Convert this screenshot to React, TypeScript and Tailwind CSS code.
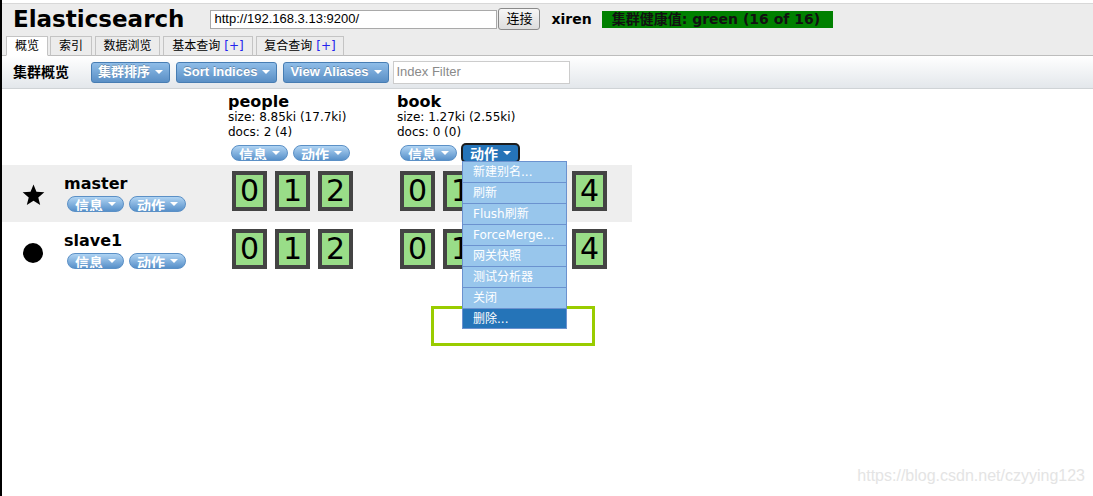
import React from "react";

const VERDANA = "font-['DejaVu_Sans','Noto_Sans_CJK_SC',sans-serif]";

function Caret() {
  return <span className="ml-[5px] inline-block h-0 w-0 self-center border-x-[4px] border-t-[4px] border-x-transparent border-t-white" />;
}

function Pill({ label }: { label: string }) {
  return (
    <div className="flex h-[16px] items-start overflow-hidden rounded-full border border-[#5b90c6] bg-gradient-to-b from-[#b0d4f3] to-[#5790c9] px-[7px] text-white">
      <span className="pt-[1px] text-[14px] font-bold leading-[17px]">{label}</span>
      <Caret />
    </div>
  );
}

function ToolButton({ label, size }: { label: string; size: string }) {
  return (
    <div className={`flex h-[21px] items-center rounded-[3px] border border-[#477db3] bg-gradient-to-b from-[#8fbde8] to-[#5a8fc5] px-[6px] font-bold text-white [text-shadow:0_-1px_0_rgba(0,0,0,0.25)] ${size}`}>
      {label}
      <Caret />
    </div>
  );
}

function Shard({ n }: { n: number }) {
  return (
    <div className="flex h-[40px] w-[35px] items-center justify-center border-[4px] border-[#444444] bg-[#99dd88] text-[30px] leading-none text-black">
      {n}
    </div>
  );
}

const menuItems = ["新建别名...", "刷新", "Flush刷新", "ForceMerge...", "网关快照", "测试分析器", "关闭", "删除..."];

function NodeCell({ name, icon }: { name: string; icon: React.ReactNode }) {
  return (
    <div className="flex w-[226px]">
      <div className="flex w-[62px] justify-center pt-[19px]">{icon}</div>
      <div className="pt-[9px]">
        <div className="text-[16px] font-bold leading-[19px]">{name}</div>
        <div className="ml-[3px] mt-[3px] flex gap-[5px]">
          <Pill label="信息" />
          <Pill label="动作" />
        </div>
      </div>
    </div>
  );
}

function ShardRow({ count, top }: { count: number; top: string }) {
  return (
    <div className={`flex gap-[8px] ${top}`}>
      {Array.from({ length: count }, (_, i) => (
        <Shard key={i} n={i} />
      ))}
    </div>
  );
}

export default function App() {
  return (
    <div className={`relative h-[496px] w-[1093px] overflow-hidden border-l-2 border-black bg-white pt-[3px] text-black ${VERDANA}`}>
      {/* header */}
      <div className="flex h-[53px] flex-col border-y border-t-[#d8d8d8] border-b-[#bdbdbd] bg-[#ececec]">
        <div className="flex h-[30px] items-center">
          <div className="ml-[11px] text-[23px] font-bold leading-none">Elasticsearch</div>
          <div className="ml-[26px] flex h-[19px] w-[287px] items-center border border-[#a9a9a9] bg-white px-[3px] font-['Liberation_Sans',sans-serif] text-[13px]">
            http://192.168.3.13:9200/
          </div>
          <div className="ml-[1px] flex h-[22px] w-[42px] items-center justify-center rounded-[3px] border border-[#8a8a8a] bg-gradient-to-b from-[#f6f6f6] to-[#dddddd] text-[13px]">
            连接
          </div>
          <div className="ml-[11px] text-[14px] font-bold">xiren</div>
          <div className="ml-[10px] flex h-[17px] w-[231px] items-center bg-[#008000] pl-[10px] text-[14px] font-bold text-[#111]">
            集群健康值: green (16 of 16)
          </div>
        </div>
        <div className="relative z-10 -mb-px mt-auto ml-[4px] flex items-end text-[12px]">
          <div className="flex h-[20px] w-[42px] items-center justify-center border border-[#c4c4c4] border-b-white bg-white">概览</div>
          <div className="ml-[2px] flex h-[20px] w-[42px] items-center justify-center border border-[#c4c4c4] border-b-[#bdbdbd] bg-[#ececec]">索引</div>
          <div className="ml-[3px] flex h-[20px] w-[65px] items-center justify-center border border-[#c4c4c4] border-b-[#bdbdbd] bg-[#ececec]">数据浏览</div>
          <div className="ml-[3px] flex h-[20px] w-[90px] items-center justify-center border border-[#c4c4c4] border-b-[#bdbdbd] bg-[#ececec]">
            基本查询 <span className="ml-[4px] text-[#2222ee]">[+]</span>
          </div>
          <div className="ml-[3px] flex h-[20px] w-[88px] items-center justify-center border border-[#c4c4c4] border-b-[#bdbdbd] bg-[#ececec]">
            复合查询 <span className="ml-[4px] text-[#2222ee]">[+]</span>
          </div>
        </div>
      </div>

      {/* toolbar */}
      <div className="flex h-[33px] items-center border-b border-[#cfd3d6] bg-gradient-to-b from-white to-[#e3e7eb] pl-[11px]">
        <div className="text-[14px] font-bold">集群概览</div>
        <div className="ml-[22px] flex items-center gap-[6px]">
          <ToolButton label="集群排序" size="text-[13px]" />
          <ToolButton label="Sort Indices" size="font-['Liberation_Sans',sans-serif] text-[13px]" />
          <ToolButton label="View Aliases" size="font-['Liberation_Sans',sans-serif] text-[13px]" />
        </div>
        <div className="ml-[4px] flex h-[23px] w-[177px] items-center border border-[#cccccc] bg-white px-[3px] font-['Liberation_Sans',sans-serif] text-[13px] text-[#8a8a8a]">
          Index Filter
        </div>
      </div>

      {/* cluster overview */}
      <div className="relative">
        <div className="flex h-[76px]">
          <div className="w-[226px]" />
          <div className="w-[169px] pt-[4px]">
            <div className="text-[16px] font-bold leading-[17px]">people</div>
            <div className="text-[12px] leading-[15px]">size: 8.85ki (17.7ki)</div>
            <div className="text-[12px] leading-[15px]">docs: 2 (4)</div>
            <div className="ml-[3px] mt-[5px] flex gap-[5px]">
              <Pill label="信息" />
              <Pill label="动作" />
            </div>
          </div>
          <div className="w-[235px] pt-[4px]">
            <div className="text-[16px] font-bold leading-[17px]">book</div>
            <div className="text-[12px] leading-[15px]">size: 1.27ki (2.55ki)</div>
            <div className="text-[12px] leading-[15px]">docs: 0 (0)</div>
            <div className="ml-[3px] mt-[5px] flex gap-[6px]">
              <Pill label="信息" />
              <div className="relative">
                <div className="flex h-[16px] items-start overflow-hidden rounded-[3px] bg-[#2574b8] px-[7px] text-white ring-2 ring-[#1c1c1c]">
                  <span className="pt-[1px] text-[14px] font-bold leading-[17px]">动作</span>
                  <Caret />
                </div>
                <div className="absolute left-[-1px] top-[16px] z-30 w-[105px] border border-[#6b92cf] bg-[#98c6ec] text-[12px] text-white">
                  {menuItems.map((item, i) =>
                    i === menuItems.length - 1 ? (
                      <div key={item} className="flex h-[19px] items-center whitespace-nowrap bg-[#2574b8] pl-[10px]">
                        {item}
                      </div>
                    ) : (
                      <div key={item} className="flex h-[21px] items-center whitespace-nowrap border-b border-[#6b92cf] pl-[10px]">
                        {item}
                      </div>
                    ),
                  )}
                </div>
              </div>
            </div>
          </div>
        </div>

        <div className="flex h-[57px] w-[630px] bg-[#eeeeee]">
          <NodeCell
            name="master"
            icon={
              <svg width="23" height="22" viewBox="0 0 24 23">
                <path d="M12 0.5l3.1 7.6 8.2 0.6-6.3 5.3 2 8-7-4.4-7 4.4 2-8L0.7 8.7l8.2-0.6z" fill="#000" />
              </svg>
            }
          />
          <div className="w-[169px] pl-[4px]"><ShardRow count={3} top="pt-[6px]" /></div>
          <div className="w-[235px] pl-[3px]"><ShardRow count={5} top="pt-[6px]" /></div>
        </div>

        <div className="flex h-[57px] w-[630px]">
          <NodeCell name="slave1" icon={<span className="mt-[2px] block h-[20px] w-[20px] rounded-full bg-black" />} />
          <div className="w-[169px] pl-[4px]"><ShardRow count={3} top="pt-[7px]" /></div>
          <div className="w-[235px] pl-[3px]"><ShardRow count={5} top="pt-[7px]" /></div>
        </div>

        <div className="absolute left-[429px] top-[217px] z-10 h-[40px] w-[164px] border-[3px] border-[#99cc00]" />
      </div>

      <div className="absolute bottom-[8px] right-[8px] font-['Liberation_Sans',sans-serif] text-[16px] text-[#e4e4e4]">
        https://blog.csdn.net/czyying123
      </div>
    </div>
  );
}
